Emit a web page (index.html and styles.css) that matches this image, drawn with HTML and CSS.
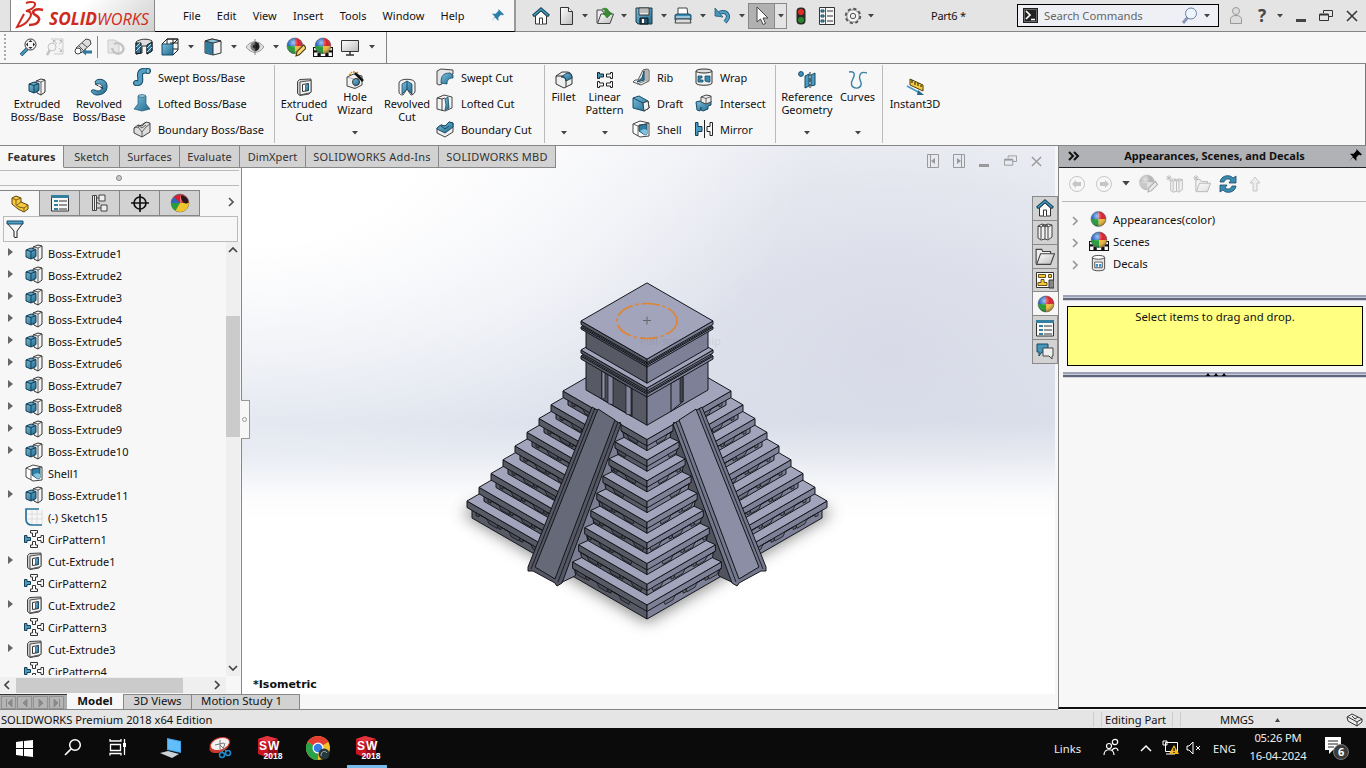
FILE: index.html
```html
<!DOCTYPE html>
<html lang="en">
<head>
<meta charset="utf-8">
<title>SOLIDWORKS - Part6</title>
<link rel="stylesheet" href="styles.css">
</head>
<body>
<svg class="defs" width="0" height="0">
  <defs>
    <linearGradient id="gb" x1="0" y1="0" x2="1" y2="1"><stop offset="0" stop-color="#7cc0de"/><stop offset="1" stop-color="#20688c"/></linearGradient>
    <linearGradient id="gw" x1="0" y1="0" x2="1" y2="1"><stop offset="0" stop-color="#fff"/><stop offset="1" stop-color="#bbb"/></linearGradient>
    <radialGradient id="gs" cx=".4" cy=".3" r=".7"><stop offset="0" stop-color="#fff" stop-opacity=".6"/><stop offset=".5" stop-color="#fff" stop-opacity="0"/><stop offset="1" stop-color="#000" stop-opacity=".35"/></radialGradient>
  </defs>
  <symbol id="down" viewBox="0 0 6 4"><path d="M0 0h6L3 3.500z" fill="#444"/></symbol>
  <symbol id="ball" viewBox="0 0 18 18"><path d="M9 9V1a8 8 0 0 0-8 8z" fill="#2468c8"/><path d="M9 9h8a8 8 0 0 0-8-8z" fill="#d8202c"/><path d="M9 9v8a8 8 0 0 0 8-8z" fill="#f0b83c"/><path d="M9 9H1a8 8 0 0 0 8 8z" fill="#209a35"/><circle cx="9" cy="9" r="8" fill="url(#gs)" stroke="#555" stroke-width=".5"/></symbol>
  <symbol id="ballcut" viewBox="0 0 18 18"><use href="#ball"/><path d="M9 9V1l-5 2-3 6z" fill="#d8202c"/><path d="M9 9l-8 0 3-5z" fill="#2468c8"/><path d="M1 9l8 0 8 0a8 8 0 0 1-16 0z" fill="#f0c52c"/><path d="M1 9a8 8 0 0 0 4 7l4-7z" fill="#2a9a3a"/><path d="M10 2c5 1 7 4 6 7-2 2-7-2-6-7z" fill="#26191a"/></symbol>
  <symbol id="boss" viewBox="0 0 18 18"><path d="M8 3l5-2 4 1v12l-4 3-4-2z" fill="#f5f5f5" stroke="#333"/><path d="M13 4v13M8.500 3l4.500 1 4-2" fill="none" stroke="#333" stroke-width=".8"/><path d="M1 6l5-2 5 1.500v7L6 15l-5-2z" fill="url(#gb)" stroke="#153e54"/><path d="M1 6l5 1.500 5-2M6 7.500V15" fill="none" stroke="#153e54"/></symbol>
  <symbol id="revolve" viewBox="0 0 18 18"><path d="M5 4C6 0 16 0 17 7c1 8-6 10-10 10s-7-4-5-5 4 1 6 1 5-2 4-5-4-2-6-2z" fill="url(#gb)" stroke="#174b66"/><path d="M5 6l9 5" stroke="#222" stroke-dasharray="4 1"/></symbol>
  <symbol id="sweep" viewBox="0 0 18 18"><path d="M3 15c6 1 4-4 4-8s4-5 8-4" fill="none" stroke="#174b66" stroke-width="6" stroke-linecap="round"/><path d="M3 15c6 1 4-4 4-8s4-5 8-4" fill="none" stroke="#539fc2" stroke-width="4" stroke-linecap="round"/><ellipse cx="15" cy="3" rx="2" ry="2.500" fill="#80bfda" stroke="#174b66" stroke-width=".7"/></symbol>
  <symbol id="loft" viewBox="0 0 18 18"><path d="M5 2l4-1 4 1v8l4 5-8 2-8-2 4-5z" fill="url(#gb)" stroke="#265a72" stroke-width=".7"/><ellipse cx="9" cy="2" rx="4" ry="1.300" fill="#9bd0e5" stroke="#265a72" stroke-width=".7"/></symbol>
  <symbol id="bound" viewBox="0 0 18 18"><path d="M1 8l4-3 4 1 4-4 4 1v9l-8 5-8-4z" fill="#ddd" stroke="#444"/><path d="M1 8l4-1 4 5 4-5 4-3M9 12v5M5 5l4 3 4-3M5 7l8-5" fill="none" stroke="#444" stroke-width=".8"/></symbol>
  <symbol id="boundc" viewBox="0 0 18 18"><path d="M1 8l4-3 4 1 4-4 4 1v9l-8 5-8-4z" fill="#eee" stroke="#444"/><path d="M1 8l4-3 4 1 4-4 4 1v4l-8 6-8-4z" fill="url(#gb)" stroke="#174b66"/><path d="M5 6l4 3 4-3" fill="none" stroke="#174b66"/></symbol>
  <symbol id="cut" viewBox="0 0 18 18"><path d="M2.500 3.500l2-2 11.500-.5v12.500L14 16l-9 1.500-2.500-2z" fill="#ccc" stroke="#444"/><path d="M5 4l11-1.500v12L5 17z" fill="#f4f4f4" stroke="#444" stroke-width=".9"/><path d="M7.500 6.500l6-1v7l-6 1z" fill="#fff" stroke="#333"/><path d="M10.500 7l3-1v6l-3 1z" fill="url(#gb)" stroke="#174b66" stroke-width=".7"/></symbol>
  <symbol id="wizard" viewBox="0 0 18 18"><path d="M1 6l7-3 8 2v9l-7 3.500L1 15z" fill="#f1f1f1" stroke="#444"/><path d="M1 6l8 2.500V17M9 8.500l7-3" stroke="#777" fill="none" stroke-width=".6"/><circle cx="10" cy="11" r="3.500" fill="url(#gb)" stroke="#333"/><path d="M9 2l8 8" stroke="#111" stroke-width="2.500"/><path d="M5 1l1 1M8 0v2M3 4l2-1M12 1l-1 1" stroke="#d88b13" stroke-width="1.500"/></symbol>
  <symbol id="revcut" viewBox="0 0 18 18"><path d="M1 5c0-5 16-5 16 0v9c-1 2-3 3-4 3L9 11l-4 6c-2 0-4-1-4-3z" fill="#f3f3f3" stroke="#444"/><path d="M9 3l5 3v10l-5-5-5 5V6z" fill="url(#gb)" stroke="#174b66" stroke-width=".8"/><path d="M9 3v8" stroke="#174b66"/></symbol>
  <symbol id="sweepcut" viewBox="0 0 18 18"><path d="M1 3l4-2 12 1v4l-3 1v3H6v6l-3 1-2-1z" fill="#e5e5e5" stroke="#444"/><path d="M5 15c0-7 2-10 9-10l3 2v3c-4 0-6 2-6 6z" fill="url(#gb)" stroke="#174b66" stroke-width=".8"/></symbol>
  <symbol id="loftcut" viewBox="0 0 18 18"><path d="M1 4l7-3 8 2v11l-7 3-8-2z" fill="#f3f3f3" stroke="#444"/><path d="M1 4l5 1v12M6 5l3-1" stroke="#444" fill="none"/><path d="M9 5l3-2 1 11-4 2 1-5z" fill="url(#gb)" stroke="#174b66" stroke-width=".8"/></symbol>
  <symbol id="fillet" viewBox="0 0 18 18"><path d="M1 5l6-4h5c3 0 5 2 5 5v7l-8 4-8-4z" fill="#eee" stroke="#333"/><path d="M6 6l6-4c3 0 5 2 5 5l-6 3c0-3-2-4-5-4z" fill="url(#gb)" stroke="#174b66"/><path d="M1 5h5c3 0 4 1 5 5v6" fill="none" stroke="#333"/></symbol>
  <symbol id="linpat" viewBox="0 0 18 18"><g fill="#fafafa" stroke="#222"><path d="M1.500 1.500h2v1.500h4v3h-4v1.500h-2z" fill="#4a9cc2"/><path d="M16.500 1.500h-2v1.500h-4v3h4v1.500h2zM1.500 10.500h2v1.500h4v3h-4v1.500h-2zM16.500 10.500h-2v1.500h-4v3h4v1.500h2z"/></g></symbol>
  <symbol id="rib" viewBox="0 0 18 18"><path d="M11 2l4-1 2 1v11l-8 4-8-3 2-2h3z" fill="#eee" stroke="#555"/><path d="M13 2v11l-8 3M15 2v12" stroke="#777" fill="none"/><path d="M12 3v9l-7 2 5-4z" fill="url(#gb)" stroke="#174b66"/></symbol>
  <symbol id="draft" viewBox="0 0 18 18"><path d="M1 4l6-2 9 5 1 7-5 3-11-3z" fill="url(#gb)" stroke="#174b66"/><path d="M1 4l10 5 5-2 1 7-5 3-1-8" fill="none" stroke="#174b66"/><path d="M11 9l5-2 1 7-5 3z" fill="#f2f2f2" stroke="#444"/></symbol>
  <symbol id="shell" viewBox="0 0 18 18"><path d="M1 4l7-3 9 2v13l-9 1-7-4z" fill="#fff" stroke="#444"/><path d="M7 5l8-1v10l-2 1-6-4z" fill="#327fa5" stroke="#174b66"/><path d="M8 11l4-2 3 1v4l-2 1z" fill="#7fc4de"/><path d="M1 4l5 2v10M6 6l11-3" fill="none" stroke="#444" stroke-width=".8"/></symbol>
  <symbol id="wrap" viewBox="0 0 18 18"><path d="M1 3v12c0 3 16 3 16 0V3" fill="#f2f2f2" stroke="#333"/><ellipse cx="9" cy="3" rx="8" ry="2" fill="#ddd" stroke="#333"/><path d="M3 8h4v2H5v2h3v2H3zM10 8h5v6h-2l-3-1z" fill="#3988af" stroke="#174b66" stroke-width=".8"/></symbol>
  <symbol id="inter" viewBox="0 0 18 18"><path d="M1 8l4-1 4 2 7-2v4l-3 1v3l-5 2-2-1v-3l-1 4-3-1z" fill="url(#gb)" stroke="#174b66"/><path d="M6 3l5-2 5 1v6l-5 2-5-2z" fill="#eee" stroke="#444"/><path d="M6 3l5 1.500 5-2M11 4.500V10" stroke="#444" fill="none" stroke-width=".8"/></symbol>
  <symbol id="mirror" viewBox="0 0 18 18"><path d="M.5 2.500h2.500v4h4v5H3v4H.5z" fill="#4a9cc2" stroke="#153e54"/><path d="M17.500 2.500H15v4h-3v5h3v4h2.500z" fill="#fafafa" stroke="#222"/><path d="M9.500 0v18" stroke="#222"/></symbol>
  <symbol id="refgeo" viewBox="0 0 18 18"><circle cx="3" cy="3" r="2.400" fill="#3f92b9" stroke="#174b66"/><path d="M7 5l4-2v12l-4 2zM13 4l4-2v12l-4 1z" fill="#4a9cc2" stroke="#174b66"/><path d="M12 1v17" stroke="#222" stroke-dasharray="4 2"/></symbol>
  <symbol id="curves" viewBox="0 0 18 18"><path d="M0 1c4-1 6 1 5 4-1 4-4 6-2 10 2 3 8 3 9-1s-3-6-1-10c1-3 4-3 7-2" fill="none" stroke="#3b83a5" stroke-width="1.400"/></symbol>
  <symbol id="instant" viewBox="0 0 18 18"><path d="M4 1l13 6v6L4 7z" fill="#f7cd3c" stroke="#4a3b10"/><path d="M6 2v3M9 4v3M12 5v3M15 7v2" stroke="#111"/><path d="M1 8l13 7" stroke="#4a96c0" stroke-width="1.500"/><path d="M11 17l1-5 6 5z" fill="#24698d"/></symbol>
  <symbol id="house" viewBox="0 0 18 18"><path d="M3.500 9v8h11V9L9 4z" fill="#fafafa" stroke="#333"/><path d="M7.500 17v-6h3v6" fill="#fff" stroke="#333"/><path d="M1 9l8-7 8 7" fill="none" stroke="#174b66" stroke-width="3"/><path d="M2 8.300l7-6 7 6" fill="none" stroke="#4da0c4" stroke-width="1.200"/></symbol>
  <symbol id="page" viewBox="0 0 18 18"><path d="M2.500.5h8l4 4v13h-12z" fill="url(#gw)" stroke="#333"/><path d="M10.500.5v4h4" fill="#fff" stroke="#333"/></symbol>
  <symbol id="folder" viewBox="0 0 18 18"><path d="M1 16V3h5l1 2h7v3" fill="#eee" stroke="#444"/><path d="M5 7h12.500L14 16.500H1.500z" fill="url(#gw)" stroke="#444"/></symbol>
  <symbol id="open" viewBox="0 0 18 18"><use href="#folder"/><path d="M6 2c4-2 7 0 7 4h3l-5 5-4-5h3c0-2-1-3-4-4z" fill="#35922d" stroke="#176014" stroke-width=".5"/></symbol>
  <symbol id="save" viewBox="0 0 18 18"><path d="M1 1h16v16H3l-2-2z" fill="url(#gb)" stroke="#1b3c4c"/><path d="M4 1h10v7H4z" fill="#eee" stroke="#333"/><path d="M5 3h8M5 5h8" stroke="#888"/><path d="M5 11h8v6H5z" fill="#285068" stroke="#111"/><path d="M7 12h2v4H7z" fill="#fff"/></symbol>
  <symbol id="print" viewBox="0 0 18 18"><path d="M4 1h9l1 8H4z" fill="#fff" stroke="#444"/><path d="M1 8l2-1h12l2 1v5H1z" fill="#3c8ab0" stroke="#174b66"/><path d="M2 12h14l1 4H1z" fill="#ddd" stroke="#444"/><path d="M2 10h14" stroke="#fff"/></symbol>
  <symbol id="undo" viewBox="0 0 18 18"><path d="M5 6c8-3 12 3 6 9" fill="none" stroke="#19516e" stroke-width="4"/><path d="M5 6c8-3 12 3 6 9" fill="none" stroke="#529ec3" stroke-width="2.500"/><path d="M1 1v8l8 1z" fill="#4794ba" stroke="#19516e" stroke-width=".7"/></symbol>
  <symbol id="cursor" viewBox="0 0 18 18"><path d="M5 0v15l3.500-3 2.500 5.500 2.500-1L11 11h5z" fill="#fff" stroke="#444"/></symbol>
  <symbol id="traffic" viewBox="0 0 18 18"><rect x="4.500" y=".5" width="9" height="17" rx="4" fill="#2c2929"/><circle cx="9" cy="5" r="3" fill="#df3025"/><circle cx="9" cy="13" r="3" fill="#28882d"/></symbol>
  <symbol id="list" viewBox="0 0 18 18"><path d="M.5 1.500h17v15.500H.5z" fill="#f7f7f7" stroke="#333"/><path d="M0 1h18v3H0z" fill="#347f9e"/><path d="M3 6h4v2H3zm0 4h4v2H3zm0 4h4v2H3z" fill="#347f9e"/><path d="M8 7h8M8 11h8M8 15h8" stroke="#333"/></symbol>
  <symbol id="options" viewBox="0 0 18 18"><path d="M1.500 .5h15v17h-15z" fill="#f7f7f7" stroke="#333"/><path d="M7.500 1v16" stroke="#555"/><path d="M3 3h3v2H3zm0 5h3v2H3zm0 5h3v2H3z" fill="#66abc9" stroke="#174b66"/><path d="M9 4h6M9 9h6M9 14h6" stroke="#333"/></symbol>
  <symbol id="gear" viewBox="0 0 18 18"><circle cx="9" cy="9" r="7.200" fill="none" stroke="#555" stroke-width="2" stroke-dasharray="3.200 2.460"/><circle cx="9" cy="9" r="6.200" fill="#f3f3f3" stroke="#666" stroke-width=".8"/><circle cx="9" cy="9" r="2.700" fill="#eee" stroke="#555"/></symbol>
  <symbol id="mag" viewBox="0 0 18 18"><path d="M8 11l-6 6" stroke="#174b66" stroke-width="3.500"/><path d="M8 11l-6 6" stroke="#4a9cc2" stroke-width="2"/><circle cx="11.500" cy="6.500" r="5.500" fill="#f6f6f6" stroke="#333"/><path d="M11.500 2l2 2h-4zm0 9l2-2h-4zM7 6.500l2-2v4zm9 0l-2-2v4z" fill="#222"/></symbol>
  <symbol id="magg" viewBox="0 0 18 18"><g opacity=".4"><path d="M5 1h12v15H8" fill="#eee" stroke="#888"/><path d="M8 3l3 3m5-3l-3 3m0 4l3 3" stroke="#777"/><path d="M7 2h3l-3 3zM16 2v3l-3-3zM16 14v-3l-3 3z" fill="#666"/><circle cx="6" cy="9" r="4" fill="#eee" stroke="#777"/><path d="M4 12l-3 5" stroke="#777" stroke-width="2.500"/></g></symbol>
  <symbol id="prev" viewBox="0 0 18 18"><path d="M2 10L12 1l4 1 1 4L7 15z" fill="#ddd" stroke="#444"/><path d="M5 8l4 4M8 5l5 4" stroke="#555"/><circle cx="4" cy="13" r="3" fill="#fff" stroke="#444"/><path d="M8 14l4-3.500v2h6v3h-6v2z" fill="#31789b"/></symbol>
  <symbol id="rotg" viewBox="0 0 18 18"><g opacity=".35"><path d="M1 2h7l4 3v10H1z" fill="#ccc" stroke="#777"/><path d="M7 6c5-3 11 2 9 7M5 10c2 7 8 7 11 3" fill="none" stroke="#666" stroke-width="2.500"/></g></symbol>
  <symbol id="section" viewBox="0 0 18 18"><path d="M1 4c3-3 12-4 16-1v10l-5 3V8L7 8v7l-6 1z" fill="#ddd" stroke="#333"/><path d="M1 5h5v10l-5 1zM12 7l5-3v9l-5 3z" fill="#37789b" stroke="#111"/><path d="M1 13l5-5M1 9l4-4M12 14l5-5M12 10l4-4" stroke="#a9dced"/></symbol>
  <symbol id="viewcube" viewBox="0 0 18 18"><path d="M1 6h11v11H1z" fill="url(#gb)" stroke="#174b66"/><path d="M1 6l5-5h11v11l-5 5M6 1v5M12 6l5-5M6 1h11M17 5H9M12 11l5 0M12 1v5" fill="none" stroke="#222"/></symbol>
  <symbol id="disp" viewBox="0 0 18 18"><path d="M1 3l7-2 9 2v12l-8 2-8-2z" fill="#f2f2f2" stroke="#333"/><path d="M1 3l8 2v12l-8-2z" fill="#317b9f"/><path d="M1 3l7-2 9 2-8 2zM9 5v12" fill="#8cc7df" stroke="#333"/></symbol>
  <symbol id="eye" viewBox="0 0 18 18"><path d="M0 9c5-7 13-7 18 0-5 7-13 7-18 0z" fill="#ddd" stroke="#999"/><circle cx="9" cy="8.500" r="4.500" fill="#777"/><path d="M9 4a4.500 4.500 0 0 1 0 9z" fill="#222"/><circle cx="9" cy="8.500" r="2" fill="#111"/><path d="M9 1v16" stroke="#555" stroke-width=".7"/></symbol>
  <symbol id="ballpen" viewBox="0 0 18 18"><svg width="16" height="16"><use href="#ball"/></svg><path d="M9 17l1-4 6-6 2 3-6 6z" fill="#f8d872" stroke="#4b3715"/></symbol>
  <symbol id="scene" viewBox="0 0 18 18"><path d="M0 9h18v9H0z" fill="#111"/><path d="M1 10h3v2H1zM14 10h3v2h-3zM4 12h3v2H4zm7 0h3v2h-3zM1 14h3v3H1zm6 0h4v3H7zm7 0h3v3h-3z" fill="#fff"/><svg x="1" width="16" height="16"><use href="#ball"/></svg></symbol>
  <symbol id="monitor" viewBox="0 0 18 18"><path d="M.5 2.500h17v11H.5z" fill="url(#gw)" stroke="#333"/><path d="M9 14v3M5 17h8" stroke="#333" stroke-width="1.500"/></symbol>
  <symbol id="part" viewBox="0 0 18 18"><path d="M1 3l4-2 5 2v4l7 3v4l-4 3-6-3-6-5z" fill="#f6c940" stroke="#5a4510"/><path d="M1 3l4 2 5-2M5 5v5l3 2 5 1 4-3M13 13v4M10 7l-4 3" stroke="#7c6115" fill="none"/></symbol>
  <symbol id="config" viewBox="0 0 18 18"><path d="M3.500 1v16M1.500 1.500h4v15h-4zM5 4h4M5 14h6" fill="#eee" stroke="#444"/><path d="M8 1h6v6H8zM10 11h6v6h-6zM5 8l4 2" fill="#eee" stroke="#444"/></symbol>
  <symbol id="target" viewBox="0 0 18 18"><circle cx="9" cy="9" r="6" fill="none" stroke="#111" stroke-width="1.700"/><path d="M0 9h18M9 0v18" stroke="#111" stroke-width="1.700"/></symbol>
  <symbol id="funnel" viewBox="0 0 18 18"><path d="M1 3l7 8v6l3 1v-7l6-8z" fill="#f5f5f5" stroke="#222"/><path d="M1 1h16v3H1z" fill="#4fa2c7" stroke="#174b66"/></symbol>
  <symbol id="sketch" viewBox="0 0 18 18"><path d="M2 6h16M2 11h16M7 2v15M12 2v15M17 2v15" stroke="#ddd"/><path d="M14 1H1v10q0 6 6 6h10" fill="none" stroke="#29749b" stroke-width="1.700"/></symbol>
  <symbol id="cirpat" viewBox="0 0 20 20"><g fill="#fafafa" stroke="#333"><path d="M6.500 1.500h7V4h-2v3.500h-3V4h-2zM6.500 18.500h7V16h-2v-3.500h-3V16h-2zM19.500 6.500v7H17v-2h-3.500v-3H17v-2z"/><path d="M.5 6.500v7H3v-2h3.500v-3H3v-2z" fill="#4a9cc2" stroke="#153e54"/></g></symbol>
  <symbol id="books" viewBox="0 0 18 18"><path d="M2 3l4-2 3 1 3-1 4 1v12l-4 3-3-1-4 1-3-2z" fill="#eee" stroke="#444"/><path d="M2 3l3 1v12M6 2l3 2v12M9 2l3 2v12M5 4l4-2M9 4l3-2M12 4l4-2" fill="none" stroke="#444"/></symbol>
  <symbol id="palette" viewBox="0 0 18 18"><path d="M.5 1.500h17v15H.5z" fill="#fff" stroke="#333"/><path d="M2.500 3.500h7v3h-7zM12.500 3.500h3v3h-3zM5 8.500h3v3h3v3H2v-3h3z" fill="#f7c737" stroke="#65501b"/><path d="M13 9h5v8h-5z" fill="#888" stroke="#333"/></symbol>
  <symbol id="chat" viewBox="0 0 18 18"><path d="M1 2h11v8H6l-3 4v-4H1z" fill="#4795b9" stroke="#174b66"/><path d="M7 6h10v8h-1v3l-3-3H7z" fill="#eee" stroke="#444"/></symbol>
  <symbol id="decal" viewBox="0 0 18 18"><path d="M2.500 3v12c0 3 13 3 13 0V3" fill="#e8e8e8" stroke="#444"/><ellipse cx="9" cy="3" rx="6.500" ry="2" fill="#fff" stroke="#444"/><path d="M5 8h8v6H5z" fill="#fff" stroke="#555"/><path d="M6 10h2.500v3H6zm3.500 0H12v3H9.500z" fill="#3c8fc3"/></symbol>
  <symbol id="refresh" viewBox="0 0 18 18"><path d="M1 7c1-7 10-8 13-4l3-2v7h-7l2-3c-3-2-6-1-7 2zM17 11c-1 7-10 8-13 4l-3 2v-7h7l-2 3c3 2 6 1 7-2z" fill="#398bb1" stroke="#174b66" stroke-width=".8"/></symbol>
  <symbol id="pin" viewBox="0 0 14 14"><path d="M8 0l6 6-2 1-1-1-3 3v4L4 9l-4 5 4-6-3-3h4l3-3z"/></symbol>
  <symbol id="restore" viewBox="0 0 14 12"><path d="M4.500 3V.5h9v6H9" fill="none" stroke="currentColor"/><path d="M.5 4.500h9v6h-9z" fill="none" stroke="currentColor"/><path d="M.5 4.500h9" stroke="currentColor" stroke-width="2"/></symbol>
  <symbol id="close" viewBox="0 0 12 12"><path d="M1 1l10 10M11 1L1 11" stroke="currentColor" stroke-width="1.500"/></symbol>
  <symbol id="chev" viewBox="0 0 6 10"><path d="M1 1l4 4-4 4" fill="none" stroke="currentColor" stroke-width="1.700"/></symbol>
  <symbol id="swbox" viewBox="0 0 24 24"><path d="M1 3l9-3 11 3v16l-10 3L1 18z" fill="#c91722"/><path d="M1 3l9-3 11 3-10 3z" fill="#e4333e"/><path d="M11 6l10-3v16l-10 3z" fill="#9b0d18"/></symbol>
</svg>

<div class="app">
  <header class="topbar">
    <div class="logo">
      <svg width="144" height="31" viewBox="0 0 144 31"><g fill="none" stroke="#cf2a20"><path d="M15 3c5-2 10-1 9 2-1 3-5 5-9 6 6 0 6 4 3 8-3 5-7 7-12 8l7-13" stroke-width="2"/><path d="M32 10c-7-2-12 1-9 4 3 2 6 3 5 6-1 4-6 5-10 5" stroke-width="2.600"/></g><text x="38" y="25" textLength="48" lengthAdjust="spacingAndGlyphs" class="solid">SOLID</text><text x="86" y="25" textLength="52" lengthAdjust="spacingAndGlyphs" class="works">WORKS</text></svg>
    </div>
    <nav class="menu"><span>File</span><span>Edit</span><span>View</span><span>Insert</span><span>Tools</span><span>Window</span><span>Help</span><svg width="13" height="13" fill="#2e7fa8"><use href="#pin"/></svg></nav>
    <div class="quick">
      <svg class="i"><use href="#house"/></svg><svg class="i"><use href="#page"/></svg><svg class="a"><use href="#down"/></svg><svg class="i"><use href="#open"/></svg><svg class="a"><use href="#down"/></svg><svg class="i"><use href="#save"/></svg><svg class="a"><use href="#down"/></svg><svg class="i"><use href="#print"/></svg><svg class="a"><use href="#down"/></svg><svg class="i"><use href="#undo"/></svg><svg class="a"><use href="#down"/></svg>
      <div class="select"><b><svg class="i"><use href="#cursor"/></svg></b><i><svg class="a"><use href="#down"/></svg></i></div>
      <svg class="i"><use href="#traffic"/></svg><svg class="i"><use href="#options"/></svg><svg class="i"><use href="#gear"/></svg><svg class="a"><use href="#down"/></svg>
    </div>
    <div class="doc">Part6 *</div>
    <div class="search"><svg width="15" height="15"><path d="M0 0h15v15H0z" fill="#222"/><path d="M1.500 1.500h12v12h-12z" stroke="#999" fill="none" stroke-width=".6"/><path d="M3 3l4 4-4 4M8 11.500h4" stroke="#fff" stroke-width="1.700" fill="none"/></svg><span>Search Commands</span><svg width="17" height="17"><path d="M7 10l-5 6" stroke="#8797b4" stroke-width="3"/><circle cx="10" cy="6.500" r="5.500" fill="#eef5fc" stroke="#6b80a5"/></svg><svg class="a"><use href="#down"/></svg></div>
    <div class="win">
      <svg width="14" height="19"><circle cx="7" cy="5" r="3.500" fill="#ddd" stroke="#999"/><path d="M1.500 17.500v-4q0-4 5.500-4t5.500 4v4z" fill="#ddd" stroke="#999"/></svg><b>?</b><svg class="a"><use href="#down"/></svg><svg width="12" height="16"><path d="M1 11h10v3H1z" fill="#444"/></svg><svg width="14" height="12"><use href="#restore"/></svg><svg width="12" height="12"><use href="#close"/></svg>
    </div>
  </header>

  <div class="viewbar">
    <div class="vb"><em class="grip"></em><svg class="i"><use href="#mag"/></svg><svg class="i"><use href="#magg"/></svg><svg class="i"><use href="#prev"/></svg><em class="vs"></em><svg class="i"><use href="#rotg"/></svg><svg class="i"><use href="#section"/></svg><svg class="i"><use href="#viewcube"/></svg><svg class="a"><use href="#down"/></svg><svg class="i"><use href="#disp"/></svg><svg class="a"><use href="#down"/></svg><svg class="i"><use href="#eye"/></svg><svg class="a"><use href="#down"/></svg><svg class="j"><use href="#ballpen"/></svg><svg class="j"><use href="#scene"/></svg><svg class="i"><use href="#monitor"/></svg><svg class="a"><use href="#down"/></svg></div>
  </div>

  <div class="ribbon">
    <div class="big mid"><svg class="i"><use href="#boss"/></svg><span>Extruded<br>Boss/Base</span></div>
    <div class="big mid"><svg class="i"><use href="#revolve"/></svg><span>Revolved<br>Boss/Base</span></div>
    <div class="small"><p><svg class="i"><use href="#sweep"/></svg>Swept Boss/Base</p><p><svg class="i"><use href="#loft"/></svg>Lofted Boss/Base</p><p><svg class="i"><use href="#bound"/></svg>Boundary Boss/Base</p></div>
    <hr>
    <div class="big mid"><svg class="i"><use href="#cut"/></svg><span>Extruded<br>Cut</span></div>
    <div class="big"><svg class="i"><use href="#wizard"/></svg><span>Hole<br>Wizard</span><svg class="a"><use href="#down"/></svg></div>
    <div class="big mid"><svg class="i"><use href="#revcut"/></svg><span>Revolved<br>Cut</span></div>
    <div class="small"><p><svg class="i"><use href="#sweepcut"/></svg>Swept Cut</p><p><svg class="i"><use href="#loftcut"/></svg>Lofted Cut</p><p><svg class="i"><use href="#boundc"/></svg>Boundary Cut</p></div>
    <hr>
    <div class="big"><svg class="i"><use href="#fillet"/></svg><span>Fillet</span><svg class="a"><use href="#down"/></svg></div>
    <div class="big"><svg class="i"><use href="#linpat"/></svg><span>Linear<br>Pattern</span><svg class="a"><use href="#down"/></svg></div>
    <div class="small"><p><svg class="i"><use href="#rib"/></svg>Rib</p><p><svg class="i"><use href="#draft"/></svg>Draft</p><p><svg class="i"><use href="#shell"/></svg>Shell</p></div>
    <div class="small"><p><svg class="i"><use href="#wrap"/></svg>Wrap</p><p><svg class="i"><use href="#inter"/></svg>Intersect</p><p><svg class="i"><use href="#mirror"/></svg>Mirror</p></div>
    <hr>
    <div class="big"><svg class="i"><use href="#refgeo"/></svg><span>Reference<br>Geometry</span><svg class="a"><use href="#down"/></svg></div>
    <div class="big"><svg class="i"><use href="#curves"/></svg><span>Curves</span><svg class="a"><use href="#down"/></svg></div>
    <hr>
    <div class="big mid"><svg class="i"><use href="#instant"/></svg><span>Instant3D</span></div>
  </div>

  <main class="main">
    <section class="work">
      <div class="stage">
        <svg class="model" id="model" width="1058" height="548" viewBox="0 146 1058 548"></svg>
        <div class="cmdtabs"><b>Features</b><span>Sketch</span><span>Surfaces</span><span>Evaluate</span><span>DimXpert</span><span>SOLIDWORKS Add-Ins</span><span>SOLIDWORKS MBD</span></div>
        <aside class="tree">
          <div class="split"><i></i></div>
          <div class="ptabs"><b><svg class="i"><use href="#part"/></svg></b><span><svg class="i"><use href="#list"/></svg></span><span><svg class="i"><use href="#config"/></svg></span><span><svg class="i"><use href="#target"/></svg></span><span><svg class="j"><use href="#ballcut"/></svg></span><svg class="more"><use href="#chev"/></svg></div>
          <div class="filter"><svg class="i"><use href="#funnel"/></svg></div>
          <div class="body">
            <ul class="rows">
              <li class="x"><svg><use href="#boss"/></svg>Boss-Extrude1</li>
              <li class="x"><svg><use href="#boss"/></svg>Boss-Extrude2</li>
              <li class="x"><svg><use href="#boss"/></svg>Boss-Extrude3</li>
              <li class="x"><svg><use href="#boss"/></svg>Boss-Extrude4</li>
              <li class="x"><svg><use href="#boss"/></svg>Boss-Extrude5</li>
              <li class="x"><svg><use href="#boss"/></svg>Boss-Extrude6</li>
              <li class="x"><svg><use href="#boss"/></svg>Boss-Extrude7</li>
              <li class="x"><svg><use href="#boss"/></svg>Boss-Extrude8</li>
              <li class="x"><svg><use href="#boss"/></svg>Boss-Extrude9</li>
              <li class="x"><svg><use href="#boss"/></svg>Boss-Extrude10</li>
              <li><svg><use href="#shell"/></svg>Shell1</li>
              <li class="x"><svg><use href="#boss"/></svg>Boss-Extrude11</li>
              <li><svg><use href="#sketch"/></svg>(-) Sketch15</li>
              <li><svg class="cp"><use href="#cirpat"/></svg>CirPattern1</li>
              <li class="x"><svg><use href="#cut"/></svg>Cut-Extrude1</li>
              <li><svg class="cp"><use href="#cirpat"/></svg>CirPattern2</li>
              <li class="x"><svg><use href="#cut"/></svg>Cut-Extrude2</li>
              <li><svg class="cp"><use href="#cirpat"/></svg>CirPattern3</li>
              <li class="x"><svg><use href="#cut"/></svg>Cut-Extrude3</li>
              <li><svg class="cp"><use href="#cirpat"/></svg>CirPattern4</li>
            </ul>
            <div class="vscroll"><svg class="ch up"><use href="#chev"/></svg><i></i><svg class="ch dn"><use href="#chev"/></svg></div>
          </div>
          <div class="hscroll"><svg class="ch lf"><use href="#chev"/></svg><i></i><svg class="ch"><use href="#chev"/></svg></div>
        </aside>
        <div class="handle"><i></i></div>
        <div class="mdi"><svg width="12" height="14"><path d="M.5.5h11v13H.5zM3.500 1v12" fill="none" stroke="currentColor"/><path d="M8 4v6L4 7z" fill="currentColor"/></svg><svg width="12" height="14"><path d="M.5.5h11v13H.5zM8.500 1v12" fill="none" stroke="currentColor"/><path d="M4 4v6l4-3z" fill="currentColor"/></svg><svg width="10" height="14"><path d="M0 10h10v3H0z" fill="currentColor"/></svg><svg width="13" height="12"><use href="#restore"/></svg><svg width="11" height="11"><use href="#close"/></svg></div>
        <div class="tasktabs"><span><svg><use href="#house"/></svg></span><span><svg><use href="#books"/></svg></span><span><svg class="wide"><use href="#folder"/></svg></span><span><svg><use href="#palette"/></svg></span><b><svg><use href="#ball"/></svg></b><span><svg><use href="#list"/></svg></span><span><svg><use href="#chat"/></svg></span></div>
        <div class="iso">*Isometric</div>
      </div>
      <div class="modeltabs"><div class="nav"><svg><path d="M4.500 2v8M10 2v8L6 6z"/></svg><svg><path d="M9 2v8L5 6z"/></svg><svg><path d="M5 2v8l4-4z"/></svg><svg><path d="M4 2v8l4-4zM9.500 2v8"/></svg></div><b>Model</b><span>3D Views</span><span>Motion Study 1</span></div>
    </section>
    <aside class="pane">
      <h2><svg width="12" height="10"><path d="M1 1l4 4-4 4M6 1l4 4-4 4" fill="none" stroke="#111" stroke-width="2"/></svg><span>Appearances, Scenes, and Decals</span><svg width="13" height="13"><use href="#pin"/></svg></h2>
      <div class="ptools">
        <svg width="18" height="18" class="off"><circle cx="9" cy="9" r="7.500" fill="none" stroke="#777"/><path d="M4 9l4-4v2h5v4H8v2z" fill="#777"/></svg><svg width="18" height="18" class="off"><circle cx="9" cy="9" r="7.500" fill="none" stroke="#777"/><path d="M14 9l-4-4v2H5v4h5v2z" fill="#777"/></svg><svg width="8" height="5"><use href="#down"/></svg><svg width="20" height="19" class="off gray"><use href="#ballpen"/></svg><svg width="18" height="18" class="off"><path d="M3 0v6M0 3h6M1 1l4 4M5 1L1 5" stroke="#555" stroke-width=".8"/><svg x="3" y="3" width="15" height="15"><use href="#books"/></svg></svg><svg width="18" height="18" class="off"><path d="M3 0v6M0 3h6M1 1l4 4M5 1L1 5" stroke="#555" stroke-width=".8"/><svg x="2" y="2" width="16" height="16"><use href="#folder"/></svg></svg><svg width="18" height="18"><use href="#refresh"/></svg><svg width="12" height="16" class="off"><path d="M6 1l5 6H8v8H4V7H1z" fill="#ddd" stroke="#777"/></svg>
      </div>
      <ul class="lib"><li><svg class="lc"><use href="#chev"/></svg><svg class="li"><use href="#ball"/></svg>Appearances(color)</li><li><svg class="lc"><use href="#chev"/></svg><svg class="ls"><use href="#scene"/></svg>Scenes</li><li><svg class="lc"><use href="#chev"/></svg><svg class="li"><use href="#decal"/></svg>Decals</li></ul>
      <div class="bar"></div>
      <div class="hint">Select items to drag and drop.</div>
      <div class="bar"><svg width="22" height="4"><path d="M0 4l3-4 3 4zM8 4l3-4 3 4zM16 4l3-4 3 4z"/></svg></div>
    </aside>
  </main>

  <div class="status"><span>SOLIDWORKS Premium 2018 x64 Edition</span><i></i><i></i><span class="ed">Editing Part</span><i></i><i></i><span class="mm">MMGS</span><svg width="5" height="4"><path d="M0 4l2.500-4L5 4z" fill="#444"/></svg><svg class="tag" width="17" height="14"><path d="M1 4l5-3 10 5v3l-5 4L2 8zM2 4l9 5 5-3M11 9v4" fill="#eee" stroke="#333"/><path d="M6 3l3 3 3-2" stroke="#333" fill="none"/></svg></div>

  <footer class="taskbar">
    <svg><path d="M4 6l7-1v7H4zM12 5l9-1v8h-9zM4 13h7v7l-7-1zM12 13h9v8l-9-1z" fill="#fff"/></svg>
    <svg><circle cx="14" cy="9" r="5.300" fill="none" stroke="#fff" stroke-width="1.500"/><path d="M10 13l-6 6" stroke="#fff" stroke-width="1.700"/></svg>
    <svg><path d="M0 3v2h11V3M.5 8.500h10v6H.500zM0 19.500v-2h11v2M14.500 3v16" fill="none" stroke="#fff" stroke-width="1.300" class="tv"/><path d="M13 7h3v4h-3z" fill="#fff"/></svg>
    <svg><path d="M8 2l14 3v12L8 14z" fill="#3fa5ee"/><path d="M9 3l12 3v10L9 13z" fill="#63bdf8"/><path d="M1 17l8-2 11 3-7 4z" fill="#cbd3d8"/></svg>
    <svg><ellipse cx="11" cy="11" rx="10" ry="5.500" fill="#c4392f" transform="rotate(-18 11 11)"/><ellipse cx="12" cy="8" rx="10" ry="6" fill="#f2f2f2" stroke="#d4362c" stroke-width="1.200" transform="rotate(-18 12 8)"/><path d="M12 4v9M7 9l9-2M12 9l7 7M17 7l-3 10" stroke="#777"/><circle cx="14" cy="19" r="2.500" fill="none" stroke="#238bcb" stroke-width="1.500"/><circle cx="20" cy="17" r="2.500" fill="none" stroke="#238bcb" stroke-width="1.500"/></svg>
    <svg><use href="#swbox"/><text x="2" y="14" class="swt">S</text><text x="11" y="14" class="swt">W</text><text x="6.500" y="23" class="swy">2018</text></svg>
    <svg><circle cx="12" cy="12" r="12" fill="#f3c22c"/><path d="M12 12L1.600 6A12 12 0 0 1 22.400 6z" fill="#e53d31"/><path d="M12 12v12A12 12 0 0 1 1.600 6z" fill="#2aa14b"/><circle cx="12" cy="12" r="5.500" fill="#fff"/><circle cx="12" cy="12" r="4.300" fill="#367be6"/><circle cx="18" cy="18" r="5.500" fill="#28373b"/><path d="M15 20c0-5 4-6 6-3" stroke="#9fb2b5" fill="none"/></svg>
    <svg class="live"><use href="#swbox"/><text x="2" y="14" class="swt">S</text><text x="11" y="14" class="swt">W</text><text x="6.500" y="23" class="swy">2018</text></svg>
    <div class="tray"><span class="links">Links</span><svg class="ppl"><circle cx="6" cy="8" r="2.500"/><path d="M1 17c0-7 10-7 10 0M9 12c3-3 6-2 6 1"/><circle cx="12" cy="4" r="2.700"/></svg><svg class="up2"><path d="M1 7l5-5 5 5" fill="none" stroke="#fff" stroke-width="1.500"/></svg><svg class="net"><path d="M3.500 2.500h12v9h-12zM1 1h4v4H1zM9 12v2M4 14h9" fill="none" stroke="#fff"/><path d="M12 5l5 9H7z" fill="#f2b71d"/><path d="M12 8v3M12 12v1" stroke="#111" stroke-width="1.300"/></svg><svg class="vol"><path d="M1 5h2l4-4v12L3 9H1z" fill="none" stroke="#fff"/><path d="M10 5l4 4M14 5l-4 4" stroke="#fff"/></svg><span class="eng">ENG</span><div class="clock">05:26 PM<br>16-04-2024</div><svg class="note"><path d="M1 1h16v13H9l-4 4v-4H1z" fill="#fff"/><path d="M4 5h10M4 8h10M4 11h6" stroke="#222"/><circle cx="17" cy="16" r="7.500" fill="#3c3c3c" stroke="#777"/><text x="14" y="20">6</text></svg></div>
  </footer>
</div>
<script src="model.js"></script>
</body>
</html>
```
FILE: styles.css
```css
* { box-sizing: border-box; }
body { margin: 0; font: 11px/13px "Noto Sans", "Open Sans", sans-serif; color: #111; background: #f7f7f7; overflow: hidden; }
ul, p, h2 { margin: 0; padding: 0; list-style: none; }
svg { flex: none; display: block; }
.defs { position: absolute; }
.app { width: 1366px; height: 768px; display: flex; flex-direction: column; }
.i { width: 18px; height: 18px; }
.j { width: 20px; height: 20px; }
.a { width: 6px; height: 4px; }

.topbar { height: 32px; flex: none; display: flex; background: #e4e4e4; border-bottom: 1px solid #858585; padding-left: 10px; }
.logo { width: 145px; border: solid #888; border-width: 0 1px; background: linear-gradient(135deg, #fff 45%, #d0d0d0); }
.solid { font: italic 700 17px "Open Sans"; fill: #cf2a20; }
.works { font: italic 400 17px "Open Sans"; fill: #cf2a20; }
.menu { width: 361px; height: 32px; background: #f7f7f7; border-bottom: 1px solid #000; border-right: 2px solid #999; display: flex; align-items: center; padding-left: 28px; }
.menu span { margin-right: 16.200px; }
.menu svg { margin-left: 10px; }
.quick { display: grid; align-items: center; justify-items: center; padding-left: 10px; grid-template-columns: 30px 21px 16px 24px 14px 26px 13px 26px 13px 27px 11px 41px 26px 26px 25px 12px; }
.select { display: flex; width: 39px; height: 26px; border: 1px solid #888; }
.select b { width: 26px; background: #b1b1b1; border-right: 1px solid #888; padding: 3px; }
.select i { display: flex; flex: 1; align-items: center; justify-content: center; }
.doc { padding: 9px 0 0 54px; width: 140px; white-space: nowrap; letter-spacing: -.25px; }
.search { width: 202px; height: 23px; margin-top: 4px; border: 1px solid #000; background: #eef0f5; display: flex; align-items: center; padding-left: 5px; color: #666; }
.search span { padding-left: 6px; width: 143px; letter-spacing: -.05px; font-size: 11.300px; }
.search .a { margin-left: 6px; }
.win { flex: 1; display: grid; align-items: center; justify-items: center; color: #333; grid-template-columns: 33px 20px 16px 26px 24px 28px; }
.win b { font-size: 17px; color: #444; }

.viewbar { height: 32px; flex: none; border-bottom: 1px solid #858585; }
.vb { width: 387px; height: 31px; padding-bottom: 1px; border-right: 1px solid #858585; display: grid; align-items: center; justify-items: center; grid-template-columns: 14px 27px 28px 27px 6px 28px 27px 26px 16px 27px 15px 27px 15px 26px 27px 28px 15px; }
.grip { width: 2px; height: 26px; margin-right: 4px; border-left: 2px dotted #aaa; }
.vs { width: 1px; height: 22px; background: #888; margin-right: 4px; }

.ribbon { height: 82px; flex: none; border-right: 1px solid #777; border-bottom: 1px solid #858585; padding-left: 6px; letter-spacing: -.04px; display: grid; justify-content: start; grid-template-columns: 62px 62px 144px 5px 50px 52px 52px 111px 3px 33px 49px 63px 83px 6px 52px 49px 5px 56px; }
.ribbon hr { margin: 1px 0 0; height: 78px; width: 1px; border: 0; background: #bbb; }
.big { display: flex; flex-direction: column; align-items: center; text-align: center; padding-top: 7px; height: 81px; }
.big span { margin-top: 1px; flex: 1; }
.big.mid { padding-top: 14px; }
.big .a { margin-bottom: 10px; }
.small { padding: 0 0 0 2px; }
.small p { height: 26px; display: flex; align-items: center; gap: 7px; white-space: nowrap; }
.small p .i { margin-left: 1px; }

.main { flex: 1; min-height: 0; display: flex; }
.work { width: 1058px; display: flex; flex-direction: column; }
.stage { position: relative; height: 548px; background: linear-gradient(90deg, transparent 1055px, #f7f7f7 1055px), linear-gradient(180deg, transparent 275px, rgba(255,255,255,.35) 310px, rgba(255,255,255,.9) 350px, #fff 375px), radial-gradient(ellipse 560px 330px at 245px 0, #fff 30%, transparent), radial-gradient(ellipse 380px 300px at 890px 210px, #d8dbe7, transparent), linear-gradient(180deg, #f0f1f6, #dce1ec 280px); }
.model { position: absolute; left: 0; top: 0; }
.cmdtabs { position: relative; display: flex; height: 22px; width: 556px; letter-spacing: .08px; }
.cmdtabs > * { border: solid #888; border-width: 0 1px 1px 0; background: #d2d2d2; color: #333; text-align: center; line-height: 21px; white-space: nowrap; width: 60px; }
.cmdtabs b { width: 64px; background: #f7f7f7; border-bottom-color: #f7f7f7; letter-spacing: 0; }
.cmdtabs :nth-child(2) { width: 56px; }
.cmdtabs :nth-child(5) { width: 66px; }
.cmdtabs :nth-child(6) { width: 133px; letter-spacing: .25px; }
.cmdtabs :nth-child(7) { width: 117px; letter-spacing: .2px; }
.tree { position: relative; width: 242px; height: 526px; background: #f7f7f7; border-right: 1px solid #858585; }
.split { margin: 0 2px 4px 0; height: 18px; border-bottom: 1px solid #bbb; background: linear-gradient(#bbb, #bbb) 0 2px / 100% 1px no-repeat; padding: 7px 0 0 116px; }
.split i { display: block; width: 6px; height: 6px; border: 1px solid #888; border-radius: 50%; background: #ccc; }
.ptabs { display: flex; height: 26px; }
.ptabs > span, .ptabs > b { width: 40px; border: solid #858585; border-width: 1px 1px 1px 0; background: #d2d2d2; display: flex; align-items: center; justify-content: center; }
.ptabs > b { background: #f7f7f7; border-bottom: 0; }
.more { width: 6px; height: 10px; margin: 7px 0 0 28px; color: #555; }
.filter { margin: 0 3px; border: 1px solid #bbb; height: 26px; padding: 3px 2px; }
.body { display: flex; height: 434px; overflow: hidden; }
.rows { width: 226px; height: 433px; overflow: hidden; }
.rows li { height: 22px; display: flex; align-items: center; padding-left: 25px; letter-spacing: -.02px; }
.rows svg { width: 18px; height: 18px; margin-right: 5px; }
.rows .cp { width: 20px; height: 20px; margin: 0 4px 0 -1px; }
.rows .x::before { content: ""; border: solid transparent; border-width: 4px 0 4px 5px; border-left-color: #666; margin: -2px 12px 0 -17px; }
.vscroll { width: 14px; background: #efefef; display: flex; flex-direction: column; align-items: center; padding-top: 3px; color: #444; }
.vscroll i { width: 14px; height: 121px; background: #cbcbcb; margin: 61px 0 226px; }
.ch { width: 6px; height: 10px; }
.up { transform: rotate(-90deg); } .dn { transform: rotate(90deg); } .lf { transform: scaleX(-1); }
.hscroll { width: 226px; height: 16px; margin-top: 1px; background: #efefef; display: flex; align-items: center; padding-left: 4px; color: #444; }
.hscroll i { width: 167px; height: 15px; background: #cbcbcb; margin: 0 31px 0 6px; }
.handle { position: absolute; left: 241px; top: 254px; width: 9px; height: 39px; background: #f7f7f7; border: 1px solid #999; border-left: 0; display: flex; align-items: center; }
.handle i { width: 5px; height: 5px; margin-left: 1px; border: 1px solid #999; border-radius: 50%; }
.mdi { position: absolute; left: 927px; top: 8px; display: flex; gap: 14px; align-items: center; color: #999; }
.mdi svg:nth-child(4) { margin-left: 1px; }
.tasktabs { position: absolute; right: 0; top: 50px; width: 26px; border: solid #8a8a8a; border-width: 1px 0 0 1px; }
.tasktabs > * { height: 23.850px; display: flex; align-items: center; justify-content: center; background: #d2d2d2; border: solid #8a8a8a; border-width: 0 1px 1px 0; }
.tasktabs > b { background: #f7f7f7; border-right: 0; }
.tasktabs svg { width: 18px; height: 18px; }
.tasktabs .wide { width: 20px; height: 20px; }
.iso { position: absolute; left: 253px; top: 532px; font: 700 11px/13px "DejaVu Sans"; letter-spacing: 0; }
.modeltabs { height: 16px; border: solid #858585; border-width: 0 0 1px; display: flex; background: #f7f7f7; }
.modeltabs > b, .modeltabs > span { line-height: 12px; text-align: center; border-right: 1px solid #888; border-top: 1px solid #888; background: #d2d2d2; width: 68px; font-size: 11.400px; }
.modeltabs > b { width: 57px; background: #f7f7f7; border-top: 0; line-height: 14px; }
.modeltabs > span:last-child { width: 108px; padding-right: 8px; }
.nav { width: 67px; border-top: 1px solid #333; background: #a9adb0; display: flex; gap: 1px; padding: 1px; }
.nav svg { width: 15px; height: 13px; border: 1px solid #919191; background: #b4b4b4; fill: #8a8a8a; stroke: #8a8a8a; }

.pane { width: 308px; height: 563px; border-left: 1px solid #858585; border-bottom: 2px solid #111; background: #f7f7f7; }
.pane h2 { height: 22px; background: #b0b2b5; border-bottom: 1px solid #222; font-size: 11px; display: flex; align-items: center; padding: 0 4px 2px 9px; white-space: nowrap; }
.pane h2 span { flex: 1; text-align: center; letter-spacing: .03px; }
.ptools { height: 34px; padding-bottom: 2px; border-bottom: 1px solid #bbb; margin-left: 3px; display: grid; align-items: center; justify-items: center; grid-template-columns: 30px 24px 20px 23px 31px 24px 28px 26px; }
.off { opacity: .38; } .gray { filter: grayscale(1); }
.lib { padding: 6px 0 0 13px; height: 93px; font-size: 11.300px; }
.lib li { height: 22px; display: flex; align-items: center; }
.lc { width: 6px; height: 10px; color: #999; margin: 3px 12px 0 0; }
.li { width: 17px; height: 18px; margin-right: 6px; }
.ls { width: 20px; height: 20px; margin: 0 4px 0 -1px; }
.bar { height: 6px; margin: 0 0 5px 4px; background: linear-gradient(#9fa2b7 0 2px, #c5cadb 2px 3px, #62667a 3px 5px, #d2d5dd 5px); padding-left: 142px; }
.bar svg { padding-top: 1px; }
.hint { height: 60px; margin: 0 3px 6px 8px; border: 1px solid #000; background: #ffff81; text-align: center; padding-top: 3px; font-size: 11.300px; }

.status { height: 18px; flex: none; background: #e5e5e5; display: flex; align-items: center; padding: 1px 3px 0 1px; white-space: nowrap; font-size: 11.150px; }
.status > span:first-child { width: 1092px; padding-bottom: 1px; }
.status i { width: 1px; height: 15px; background: #ccc; margin-right: 7px; }
.status i:nth-of-type(2) { margin-right: 3px; }
.ed { width: 67px; padding-bottom: 1px; } .status .mm { margin-left: 32px; width: 55px; padding-bottom: 1px; letter-spacing: -.2px; }
.tag { margin-left: auto; }

.taskbar { height: 40px; flex: none; background: #0b0b0b; color: #eee; display: flex; align-items: flex-start; padding-left: 12px; }
.taskbar > svg { width: 24px; height: 24px; margin: 8px 25px 0 0; overflow: visible; }
.taskbar > .live { height: 40px; width: 40px; margin: 0 0 0 -8px; padding: 8px 8px 5px; border-bottom: 3px solid #76b9ed; }
.swt { font: 700 12px "Liberation Sans"; fill: #fff; }
.swy { font: 700 8.500px "Liberation Sans"; fill: #fff; }
.tray { margin-left: auto; width: 312px; height: 40px; display: grid; align-items: center; grid-template-columns: 48px 38px 22px 24px 27px 36px 58px 59px; font-size: 11.200px; }
.ppl { width: 18px; height: 20px; fill: none; stroke: #fff; stroke-width: 1.2; margin-left: 1px; }
.up2 { width: 12px; height: 9px; } .net { width: 19px; height: 16px; } .vol { width: 16px; height: 14px; }
.clock { text-align: center; line-height: 18px; padding: 1px 0 3px; white-space: nowrap; letter-spacing: -.15px; }
.note { width: 27px; height: 25px; margin-left: 17px; overflow: visible; }
.note text { font: 700 11px "Noto Sans"; fill: #fff; }
```
FILE: model.js
```js
// Draws the stepped pyramid part in isometric projection.
const CX = 647, S = 0.577;
const TOP = '#a1a4bb', DARK = '#575965', MID = '#7d8096';
const out = [];
const poly = (pts, fill, sw = 1) =>
  out.push(`<polygon points="${pts.map(p => p.map(n => n.toFixed(1)).join()).join(' ')}" fill="${fill}" stroke="#15161b" stroke-width="${sw}"/>`);
const line = (pts, w = 0.9) =>
  out.push(`<polyline points="${pts.map(p => p.map(n => n.toFixed(1)).join()).join(' ')}" fill="none" stroke="#15161b" stroke-width="${w}"/>`);

// A square prism: half width w, centre of the top at y, height h.
function prism(w, y, h) {
  const f = y + S * w;
  poly([[CX - w, y], [CX, f], [CX, f + h], [CX - w, y + h]], DARK);
  poly([[CX + w, y], [CX, f], [CX, f + h], [CX + w, y + h]], MID);
  poly([[CX - w, y], [CX, y - S * w], [CX + w, y], [CX, f]], TOP);
}

out.push('<defs><filter id="soft" x="-20%" y="-20%" width="140%" height="160%"><feGaussianBlur stdDeviation="8"/></filter></defs>');
out.push('<polygon points="462,513 647,622 832,513 647,420" fill="#555" opacity=".75" filter="url(#soft)"/>');

const tier = k => ({ w: 84 + 12 * k, y: 391 + 13.75 * k });
for (let k = 8; k >= 0; k--) {
  const { w, y } = tier(k);
  prism(w - 5, y + 6, k === 8 ? 11 : 8);
  prism(w, y, 6.5);
  for (const m of [-1, 1]) {
    for (let d = 9; d < w - 24; d += 22) {
      const at = (t, o) => [CX + m * (w - t), y + S * t + o];
      const pts = [at(d, 6.5), at(d, 9.5), at(d + 3, 9), at(d + 3, 6.5), at(d + 11, 6.5), at(d + 13, 10), at(d + 21, 10), at(d + 22, 6.5)];
      poly(pts, m < 0 ? '#4b4d58' : '#6f7287', 0.8);
    }
  }
}

// Ramps, one for each visible side.
for (const m of [-1, 1]) {
  const X = x => m < 0 ? x : 2 * CX - x;
  const P = a => a.map(([x, y]) => [X(x), y]);
  const side = [[620, 422], [556, 585], [575, 576]];
  for (let k = 8; k >= 0; k--) {
    const { w, y } = tier(k);
    const x = 621 - 6.05 * k, py = y + S * (x - (CX - w));
    side.push([x + 3, py + 13], [x + 2, py + 8], [x, py + 6.5], [x, py]);
  }
  poly(P(side), m < 0 ? '#7c7f94' : '#50525e');
  poly(P([[592, 407], [528, 567], [528, 571], [533, 571], [555, 583], [557, 586], [562, 583], [621, 424]]), m < 0 ? '#555864' : '#73778c');
  poly(P([[598, 409], [535, 567], [555, 579], [615, 420]]), m < 0 ? '#666977' : '#8b8ea4');
  line(P([[595, 408], [531, 569]]));
  line(P([[618, 422], [558, 582]]));
}

// Temple on the platform.
prism(61, 360, 30);
const L = (x, o) => [x, 360 + S * (x - (CX - 61)) + o];
poly([L(602, 2), L(632, 2), L(632, 30), L(602, 30)], '#4b4d57');
poly([L(602, 2), L(605, 2), L(605, 27), L(602, 30)], '#8d90a5', 0.7);
poly([L(608, 2), L(613, 2), L(613, 29), L(608, 31)], '#85889d', 0.7);
poly([L(626, 2), L(631, 2), L(631, 29), L(626, 31)], '#85889d', 0.7);
const R = (x, o) => [x, 360 + S * (CX + 61 - x) + o];
poly([R(671, 2), R(683, 2), R(683, 27), R(671, 30)], '#7d8096');
poly([R(680, 2), R(683, 2), R(683, 27), R(680, 26)], '#44464f', 0.7);
prism(66, 356, 3);
prism(64, 353, 3);
prism(66, 350, 3);
prism(61, 328, 20);
prism(66, 327, 2);
prism(64, 324, 3);
prism(66, 321, 3.500);

out.push('<ellipse cx="647" cy="321" rx="30" ry="17.500" fill="none" stroke="#e08435" stroke-width="1.700" stroke-dasharray="18 3 3 3"/>');
out.push('<path d="M643 320.500h8M647 316.500v8" stroke="#66656d"/>');
out.push('<text x="640" y="345" font-family="Noto Sans" font-size="11" fill="#666" opacity=".13">Full-screen Snip</text>');
document.getElementById('model').innerHTML = out.join('');
```
